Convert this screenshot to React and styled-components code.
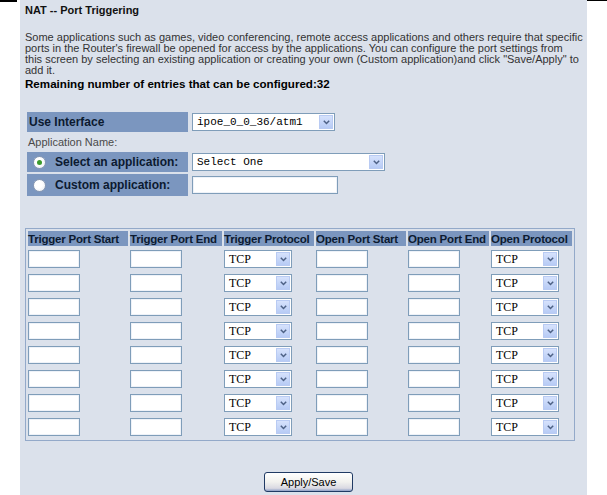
import styled, { createGlobalStyle } from "styled-components";

const GlobalStyle = createGlobalStyle`
  html, body {
    margin: 0;
    padding: 0;
    background: #ffffff;
  }
  body {
    font-family: "Liberation Sans", Arial, sans-serif;
  }
`;

const Page = styled.div`
  display: flex;
  width: 607px;
  height: 495px;
  overflow: hidden;
`;

const Gutter = styled.div`
  width: ${(p) => p.$width}px;
  flex: none;
  display: flex;
  justify-content: ${(p) => (p.$right ? "flex-end" : "flex-start")};
`;

const EdgeLine = styled.div`
  width: ${(p) => p.$width}px;
  height: ${(p) => p.$height}px;
  background: #000;
`;

const Panel = styled.div`
  width: 567px;
  flex: none;
  background: #dbe1eb;
  padding: 4px 0 0 5px;
  box-sizing: border-box;
`;

const Title = styled.div`
  font-size: 11px;
  font-weight: bold;
  color: #111;
  line-height: 13px;
`;

const Intro = styled.p`
  margin: 15px 0 0;
  font-size: 11px;
  line-height: 11px;
  color: #333;
  white-space: nowrap;
`;

const Remaining = styled.div`
  margin-top: 1px;
  font-size: 11.6px;
  font-weight: bold;
  line-height: 13px;
  color: #000;
`;

const Form = styled.div`
  display: grid;
  grid-template-columns: 161px auto;
  column-gap: 4px;
  row-gap: 2px;
  margin: 22px 0 0 2px;
  align-items: center;
  justify-items: start;
`;

const LabelCell = styled.div`
  background: #7b96bf;
  height: ${(p) => p.$h || 20}px;
  width: 161px;
  display: flex;
  align-items: center;
  gap: 9px;
  padding-left: ${(p) => (p.$radio ? 6 : 2)}px;
  box-sizing: border-box;
  font-size: 12px;
  font-weight: bold;
  color: #0c1a30;
`;

const SubLabel = styled.div`
  grid-column: 1 / 3;
  height: 16px;
  display: flex;
  align-items: center;
  font-size: 11px;
  color: #4a4a4a;
  padding-left: 1px;
`;

const Radio = styled.span`
  width: 11px;
  height: 11px;
  border-radius: 50%;
  border: 1px solid #8a9ab4;
  background: radial-gradient(circle at 40% 40%, #ffffff 40%, #e4e8f0 100%);
  display: flex;
  align-items: center;
  justify-content: center;
  flex: none;
  &::after {
    content: "";
    width: 5px;
    height: 5px;
    border-radius: 50%;
    background: ${(p) => (p.$checked ? "#3b9a2c" : "transparent")};
  }
`;

const SelectBox = styled.div`
  width: ${(p) => p.$w}px;
  height: 18px;
  box-sizing: border-box;
  border: 1px solid #7f9db9;
  background: #fff;
  display: flex;
  align-items: center;
  justify-content: space-between;
  padding: 0 1px 0 4px;
  font-family: ${(p) =>
    p.$serif
      ? `"Liberation Serif", "Times New Roman", serif`
      : `"Liberation Mono", "Courier New", monospace`};
  font-size: ${(p) => (p.$serif ? 12 : 11)}px;
  color: #000;
`;

const ArrowButton = styled.span`
  width: 14px;
  height: 14px;
  box-sizing: border-box;
  border: 1px solid #b9cbf3;
  background: linear-gradient(#d6e2fc, #b7cbf5);
  display: flex;
  align-items: center;
  justify-content: center;
`;

const TextBox = styled.div`
  width: ${(p) => p.$w}px;
  height: 18px;
  box-sizing: border-box;
  border: 1px solid #7f9db9;
  box-shadow: inset 0 0 0 1px #eef2f8;
  background: #fff;
`;

const Table = styled.div`
  margin: 32px 0 0 0;
  width: 550px;
  box-sizing: border-box;
  border: 1px solid #93a9c9;
  padding: 2px;
  display: grid;
  grid-template-columns: 100px 92px 90px 90px 81px 81px;
  column-gap: 2px;
  row-gap: 2px;
`;

const HeadCell = styled.div`
  background: #7b96bf;
  height: 15px;
  display: flex;
  align-items: center;
  font-size: 11.5px;
  font-weight: bold;
  color: #0c1a30;
  white-space: nowrap;
  letter-spacing: -0.2px;
`;

const Cell = styled.div`
  height: 22px;
  display: flex;
  align-items: center;
`;

const Actions = styled.div`
  display: flex;
  justify-content: center;
  width: 550px;
  margin-top: 31px;
  padding-left: 17px;
  box-sizing: border-box;
`;

const Button = styled.button`
  width: 89px;
  height: 20px;
  border: 1px solid #203a64;
  border-radius: 3px;
  background: linear-gradient(#ffffff 0%, #f1f1ee 50%, #d9d9e2 85%, #8c9fc6 100%);
  font-family: "Liberation Sans", Arial, sans-serif;
  font-size: 11px;
  color: #000;
  padding: 0;
`;

const Chevron = () => (
  <svg width="7" height="5" viewBox="0 0 7 5">
    <path d="M0.8 0.8 L3.5 3.5 L6.2 0.8" fill="none" stroke="#4d6185" strokeWidth="1.5" />
  </svg>
);

const Select = ({ w, value, serif }) => (
  <SelectBox $w={w} $serif={serif}>
    <span>{value}</span>
    <ArrowButton>
      <Chevron />
    </ArrowButton>
  </SelectBox>
);

const headers = [
  "Trigger Port Start",
  "Trigger Port End",
  "Trigger Protocol",
  "Open Port Start",
  "Open Port End",
  "Open Protocol",
];

const rows = Array.from({ length: 8 }, (_, i) => i);

const App = () => {
  return (
    <Page>
      <GlobalStyle />
      <Gutter $width={20}>
        <EdgeLine $width={17} $height={2} />
      </Gutter>
      <Panel>
        <Title>NAT -- Port Triggering</Title>
        <Intro>
          Some applications such as games, video conferencing, remote access applications and others require that specific
          <br />
          ports in the Router's firewall be opened for access by the applications. You can configure the port settings from
          <br />
          this screen by selecting an existing application or creating your own (Custom application)and click "Save/Apply" to
          <br />
          add it.
        </Intro>
        <Remaining>Remaining number of entries that can be configured:32</Remaining>

        <Form>
          <LabelCell>Use Interface</LabelCell>
          <Select w={143} value="ipoe_0_0_36/atm1" />
          <SubLabel>Application Name:</SubLabel>
          <LabelCell $radio>
            <Radio $checked />
            Select an application:
          </LabelCell>
          <Select w={193} value="Select One" />
          <LabelCell $radio $h={22}>
            <Radio />
            Custom application:
          </LabelCell>
          <TextBox $w={146} />
        </Form>

        <Table>
          {headers.map((h) => (
            <HeadCell key={h}>{h}</HeadCell>
          ))}
          {rows.map((r) =>
            headers.map((h, c) => (
              <Cell key={`${r}-${c}`}>
                {c === 2 || c === 5 ? (
                  <Select w={68} value="TCP" serif />
                ) : (
                  <TextBox $w={52} />
                )}
              </Cell>
            ))
          )}
        </Table>

        <Actions>
          <Button>Apply/Save</Button>
        </Actions>
      </Panel>
      <Gutter $width={20} $right>
        <EdgeLine $width={20} $height={1} />
      </Gutter>
    </Page>
  );
};

export default App;
